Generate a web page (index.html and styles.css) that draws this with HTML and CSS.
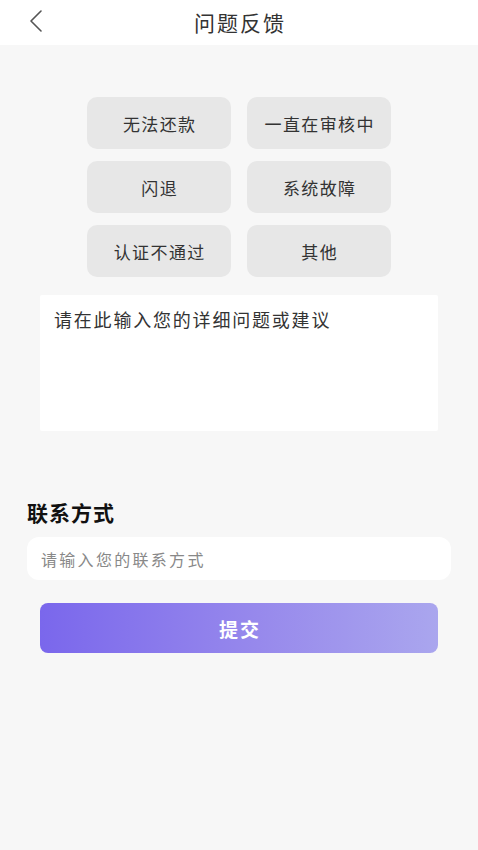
FILE: index.html
```html
<!DOCTYPE html>
<html lang="zh-CN">
<head>
<meta charset="utf-8">
<title>问题反馈</title>
<link rel="stylesheet" href="styles.css">
</head>
<body>
<header class="nav">
  <span class="back">
    <svg width="16" height="22" viewBox="0 0 16 22"><polyline points="13,1 3,11 13,21" fill="none" stroke="#555" stroke-width="1.6" stroke-linecap="round" stroke-linejoin="round"/></svg>
  </span>
  <h1 class="title">问题反馈</h1>
</header>
<main class="page">
  <div class="tags">
    <div class="tag">无法还款</div>
    <div class="tag">一直在审核中</div>
    <div class="tag">闪退</div>
    <div class="tag">系统故障</div>
    <div class="tag">认证不通过</div>
    <div class="tag">其他</div>
  </div>
  <div class="textarea">请在此输入您的详细问题或建议</div>
  <h2 class="label">联系方式</h2>
  <div class="input">请输入您的联系方式</div>
  <div class="submit">提交</div>
</main>
</body>
</html>
```
FILE: styles.css
```css
* { box-sizing: border-box; margin: 0; padding: 0; }
html, body { height: 100%; }
body {
  background: #f7f7f7;
  font-family: "Noto Sans CJK SC", "Noto Sans", sans-serif;
  color: #333;
}
.nav {
  height: 45px;
  background: #fff;
  display: flex;
  align-items: center;
  justify-content: center;
  position: relative;
}
.back {
  position: absolute;
  left: 28px;
  top: 10px;
  width: 16px;
  height: 22px;
  display: flex;
}
.title {
  font-size: 21px;
  font-weight: 400;
  letter-spacing: 2px;
  padding-left: 2px;
  color: #333;
  line-height: 45px;
}
.page {
  display: flex;
  flex-direction: column;
}
.tags {
  margin: 52px auto 0;
  display: grid;
  grid-template-columns: 144px 144px;
  column-gap: 16px;
  row-gap: 12px;
}
.tag {
  height: 52px;
  background: #e7e7e7;
  border-radius: 10px;
  display: flex;
  align-items: center;
  justify-content: center;
  font-size: 17px;
  letter-spacing: 1.4px;
  padding-left: 1.4px;
  color: #333;
}
.textarea {
  margin: 18px 40px 0;
  height: 136px;
  background: #fff;
  border-radius: 2px;
  padding: 12px 14px;
  font-size: 18px;
  letter-spacing: 1.8px;
  line-height: 24px;
  color: #333;
}
.label {
  margin: 69px 0 0 27px;
  font-size: 21px;
  font-weight: 700;
  letter-spacing: 1px;
  color: #111;
  line-height: 24px;
}
.input {
  margin: 13px 27px 0;
  height: 43px;
  background: #fff;
  border-radius: 12px;
  padding: 0 14px;
  display: flex;
  align-items: center;
  font-size: 16px;
  letter-spacing: 2.3px;
  color: #888;
}
.submit {
  margin: 23px 40px 0;
  height: 50px;
  border-radius: 8px;
  background: linear-gradient(90deg, #7a67ec 0%, #9789ec 55%, #aaa6ee 100%);
  display: flex;
  align-items: center;
  justify-content: center;
  font-size: 19px;
  font-weight: 700;
  letter-spacing: 2px;
  padding-left: 2px;
  color: #fff;
}
```
